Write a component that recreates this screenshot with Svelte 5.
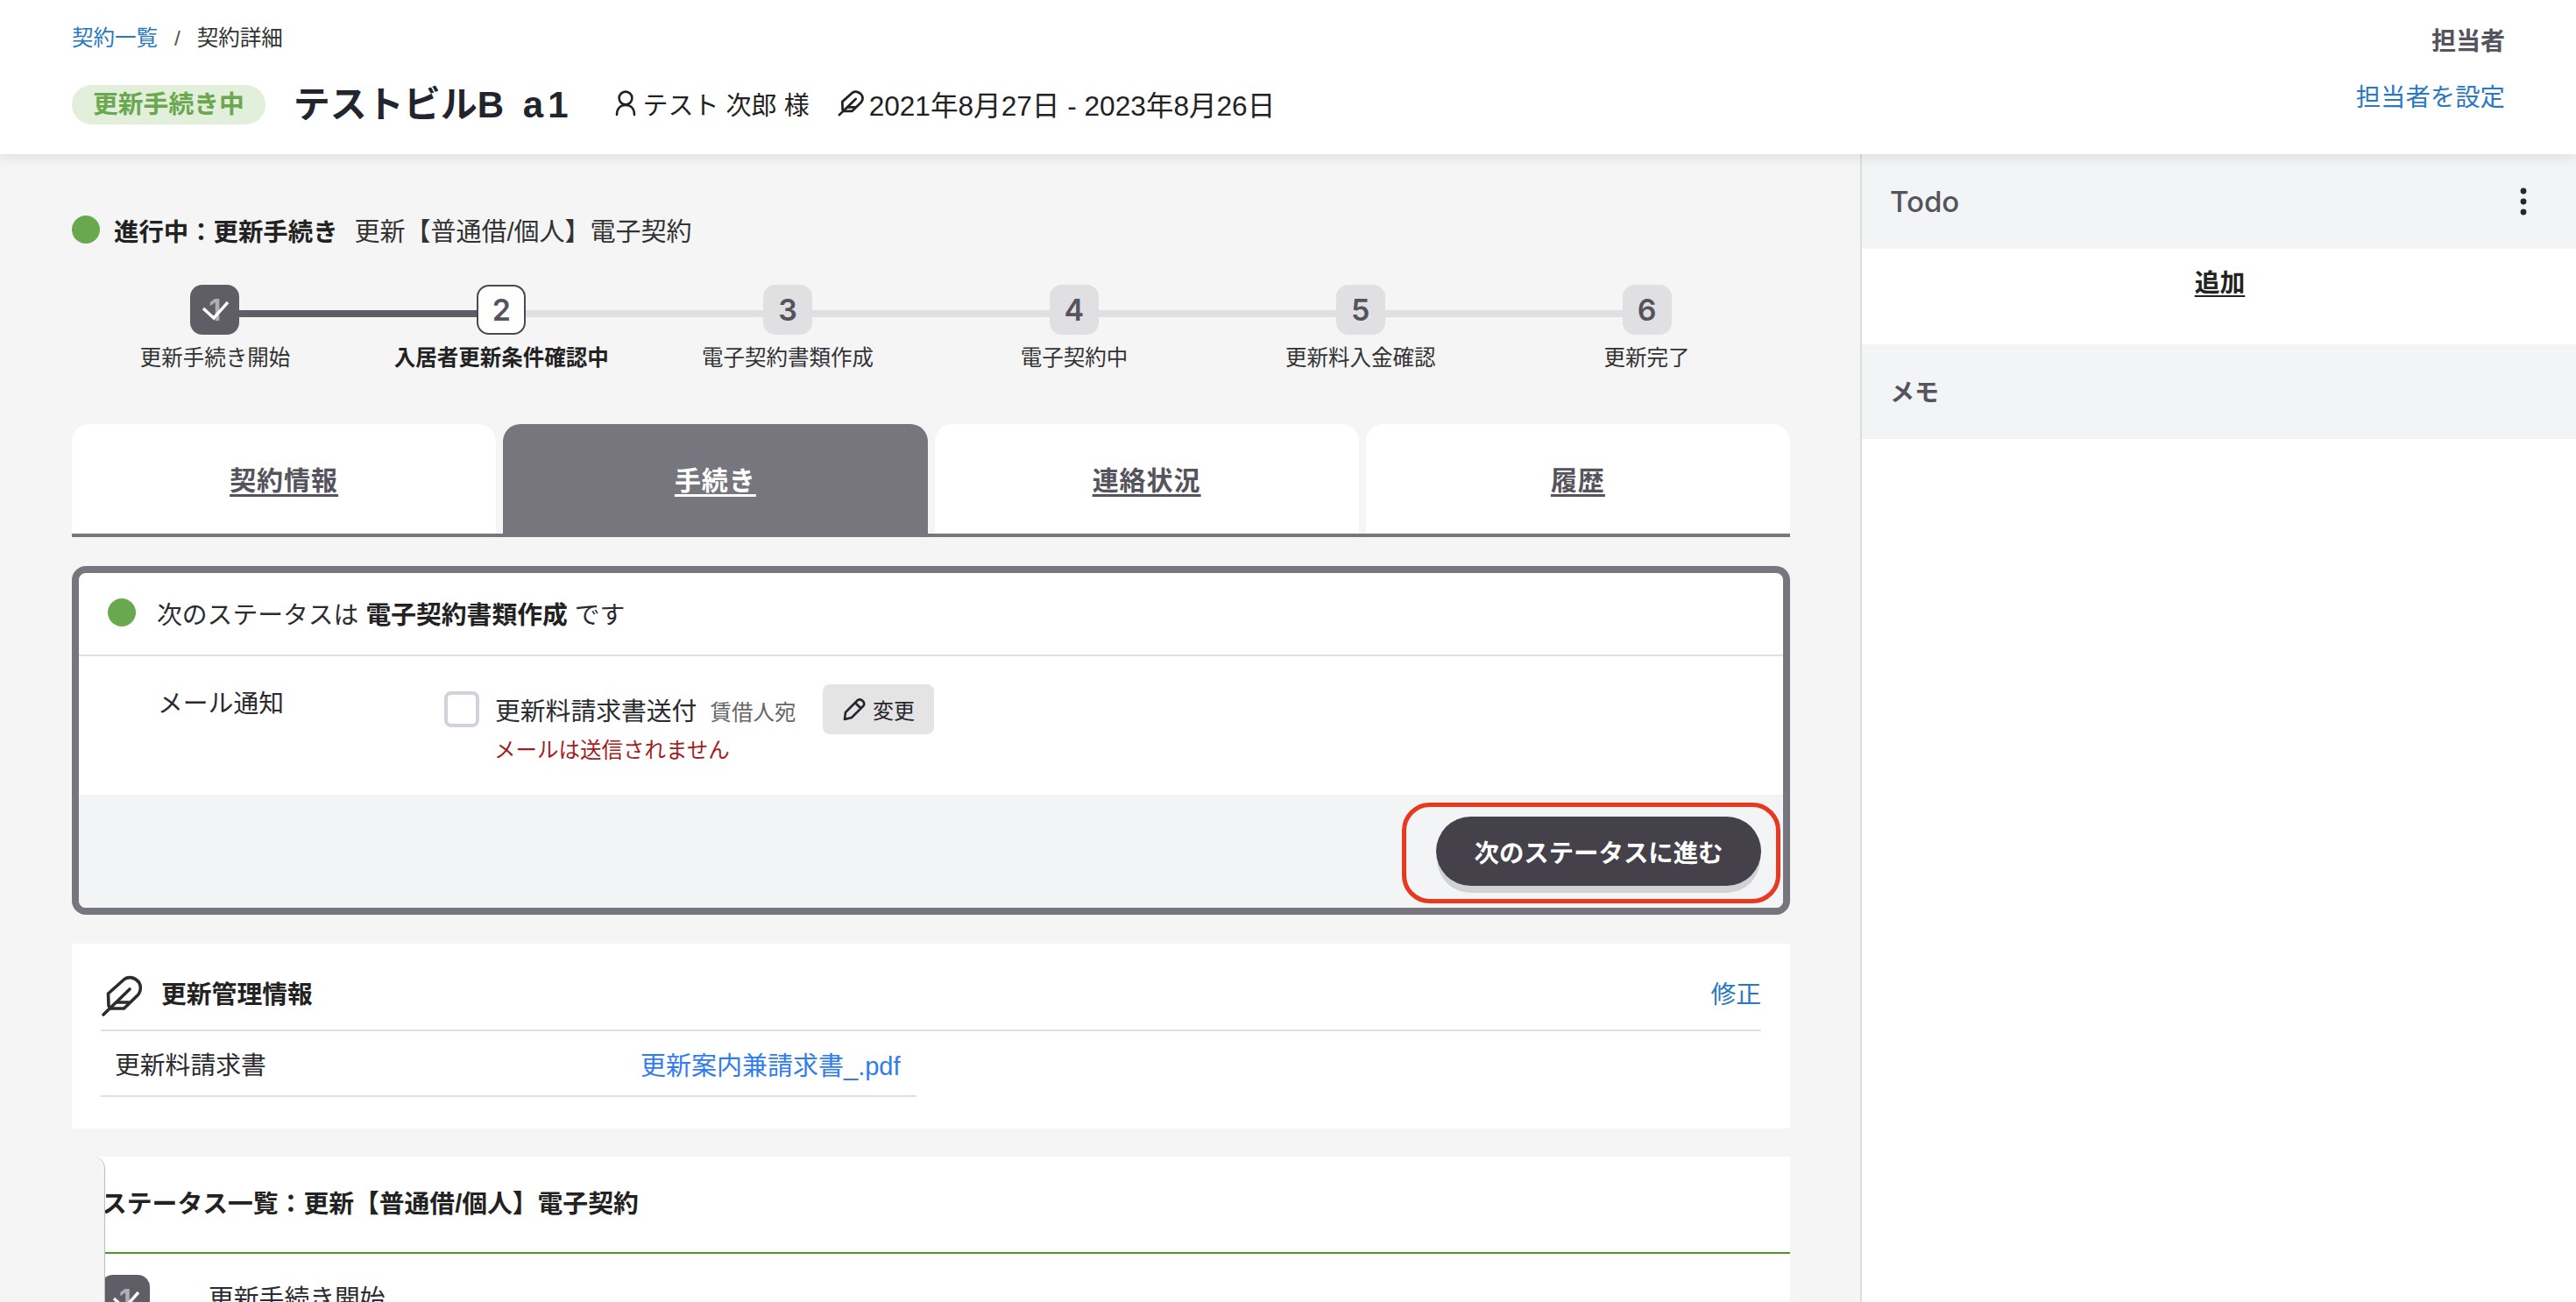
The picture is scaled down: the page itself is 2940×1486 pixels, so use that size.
<script>
	const steps = [
		{ no: 1, label: '更新手続き開始', state: 'done' },
		{ no: 2, label: '入居者更新条件確認中', state: 'current' },
		{ no: 3, label: '電子契約書類作成', state: '' },
		{ no: 4, label: '電子契約中', state: '' },
		{ no: 5, label: '更新料入金確認', state: '' },
		{ no: 6, label: '更新完了', state: '' },
	];
	const tabs = ['契約情報', '手続き', '連絡状況', '履歴'];
	let activeTab = $state(1);
</script>

{#snippet feather(size, weight)}
	<svg class="feather" width={size} height={size} viewBox="15 12 48 48" fill="none" stroke="currentColor" stroke-width={weight} stroke-linecap="round" stroke-linejoin="round">
		<path d="M26 50 L24 47 L23.5 33 L42 16.5 C47 13 54 14.5 58.5 20 C61 24 61 30 58 34 L41.5 50 Z" />
		<path d="M34 43 H47" />
		<path d="M18 57 L48 28" />
	</svg>
{/snippet}

{#snippet doneBox(no)}
	<span class="num">{no}</span>
	<svg class="check" viewBox="0 0 56 57" fill="none" stroke="#fff" stroke-width="3.4">
		<path d="M15 27 L27 38 L43 20" />
	</svg>
{/snippet}

<div class="page">
	<header class="top">
		<div class="top-left">
			<nav class="crumbs">
				<a href="#list">契約一覧</a>
				<span class="sep">/</span>
				<span>契約詳細</span>
			</nav>
			<div class="title-row">
				<span class="badge">更新手続き中</span>
				<h1>テストビル<span class="latin">B a1</span></h1>
				<span class="meta person">
					<svg width="24" height="30" viewBox="0 0 24 30" fill="none" stroke="currentColor" stroke-width="2.6" stroke-linecap="round">
						<circle cx="12" cy="9" r="7.4" />
						<path d="M2 28 C2 21 6 17 12 17 S22 21 22 28" />
					</svg>
					<span>テスト 次郎 様</span>
				</span>
				<span class="meta dates">
					{@render feather(30, 4.4)}
					<span>2021年8月27日 - 2023年8月26日</span>
				</span>
			</div>
		</div>
		<div class="top-right">
			<div class="owner-label">担当者</div>
			<a class="link" href="#owner">担当者を設定</a>
		</div>
	</header>

	<div class="body">
		<main>
			<div class="status-line">
				<span class="dot"></span>
				<strong>進行中：更新手続き</strong>
				<span>更新【普通借/個人】電子契約</span>
			</div>

			<ol class="stepper">
				{#each steps as s, i}
					<li class="step {s.state}" class:first={i === 0}>
						<div class="box">
							{#if s.state === 'done'}
								{@render doneBox(s.no)}
							{:else}
								<span class="num">{s.no}</span>
							{/if}
						</div>
						<div class="step-label">{s.label}</div>
					</li>
				{/each}
			</ol>

			<div class="tabs">
				{#each tabs as t, i}
					<button class:active={i === activeTab} onclick={() => (activeTab = i)}>{t}</button>
				{/each}
			</div>

			<section class="next-card">
				<div class="next-head">
					<span class="dot"></span>
					<span>次のステータスは <strong>電子契約書類作成</strong> です</span>
				</div>
				<div class="next-body">
					<div class="mail-label">メール通知</div>
					<div class="mail-main">
						<div class="mail-row">
							<input type="checkbox" class="cb" />
							<span class="mail-name">更新料請求書送付</span>
							<span class="mail-to">賃借人宛</span>
							<button class="change">
								<svg width="26" height="26" viewBox="30 22 26 26" fill="none" stroke="currentColor" stroke-width="2.6" stroke-linejoin="round">
									<path d="M32 46 L33 38 L47 24 Q49.5 22.5 52 24.5 L53.5 26 Q55 28.5 53.5 30.5 L40 44 Z M44 27 L51 34" />
								</svg>
								変更
							</button>
						</div>
						<div class="mail-warn">メールは送信されません</div>
					</div>
				</div>
				<div class="next-foot">
					<div class="mark">
						<button class="advance">次のステータスに進む</button>
					</div>
				</div>
			</section>

			<section class="info-card">
				<div class="info-head">
					{@render feather(48, 3.6)}
					<h2>更新管理情報</h2>
					<a class="link edit" href="#edit">修正</a>
				</div>
				<div class="info-row">
					<span>更新料請求書</span>
					<a href="#pdf">更新案内兼請求書_.pdf</a>
				</div>
			</section>

			<section class="list-card">
				<div class="gutter"></div>
				<div class="list-main">
					<h2>ステータス一覧：更新【普通借/個人】電子契約</h2>
					<div class="list-row">
						<div class="box done">
							{@render doneBox(1)}
						</div>
						<span>更新手続き開始</span>
					</div>
				</div>
			</section>
		</main>

		<aside>
			<div class="side-head todo">
				<span>Todo</span>
				<svg width="8" height="32" viewBox="0 0 8 32" fill="#26262c">
					<circle cx="4" cy="4" r="3.4" />
					<circle cx="4" cy="16" r="3.4" />
					<circle cx="4" cy="28" r="3.4" />
				</svg>
			</div>
			<div class="todo-body"><a href="#add">追加</a></div>
			<div class="side-head memo">メモ</div>
		</aside>
	</div>
</div>

<style>
	:global(body) { margin: 0; background: #f5f5f5; }
	.page {
		width: 2940px; height: 1486px; overflow: hidden; display: flex; flex-direction: column;
		font-family: "Liberation Sans", "Noto Sans CJK JP", sans-serif; font-size: 28.8px; color: #2b2b30; background: #f5f5f5;
	}
	a { text-decoration: none; }
	.link { color: #2a78c4; }

	.top { height: 176px; flex: none; box-sizing: border-box; display: flex; justify-content: space-between; background: #fff; box-shadow: 0 3px 14px rgba(0, 0, 0, 0.1); position: relative; z-index: 2; padding: 26px 81px 0 82px; }
	.crumbs { display: flex; font-size: 24.5px; line-height: 36px; color: #333; }
	.crumbs a { color: #2a78c4; }
	.sep { margin: 0 19px; color: #555; }
	.title-row { display: flex; align-items: center; margin-top: 35px; height: 45px; }
	.badge { background: #e2efda; color: #6aa84f; font-weight: 700; border-radius: 23px; height: 45px; line-height: 45px; padding: 0 24px; margin-right: 32px; white-space: nowrap; }
	h1 { margin: 0; font-size: 42px; font-weight: 700; color: #22252b; line-height: 45px; white-space: nowrap; }
	.latin { letter-spacing: 5px; }
	.meta { display: flex; align-items: center; white-space: nowrap; color: #222; padding-bottom: 3px; }
	.person { margin-left: 48px; gap: 8px; font-size: 29px; }
	.dates { margin-left: 32px; gap: 6px; font-size: 31.6px; }
	.top-right { text-align: right; margin-top: -1px; }
	.owner-label { font-weight: 700; color: #55545c; line-height: 42px; font-size: 28px; margin-top: 2px; }
	.top-right .link { display: block; margin-top: 21px; line-height: 42px; font-size: 28.4px; }

	.body { flex: 1; display: flex; min-height: 0; }
	main { width: 2123px; flex: none; box-sizing: border-box; padding: 70px 80px 0 82px; }
	aside { flex: 1; border-left: 2px solid #ddd; background: #fff; }

	.dot { width: 32px; height: 32px; border-radius: 50%; background: #6aa84f; flex: none; }
	.status-line { display: flex; align-items: center; height: 32px; white-space: nowrap; font-size: 29px; }
	.status-line strong { margin-left: 16px; margin-right: 19px; color: #222; font-size: 28.4px; }
	.status-line span:last-child { color: #333; }

	.stepper { list-style: none; margin: 47px 0 0; padding: 0; display: grid; grid-template-columns: repeat(6, 1fr); }
	.step { position: relative; display: flex; flex-direction: column; align-items: center; }
	.step::before { content: ""; position: absolute; left: -50%; right: 50%; top: 29px; height: 8px; background: #e0e0e2; }
	.step.first::before { display: none; }
	.step.current::before { background: #5f5e66; }
	.box { width: 56px; height: 57px; box-sizing: border-box; border-radius: 14px; background: #e0e0e2; color: #55545c; display: flex; align-items: center; justify-content: center; position: relative; z-index: 1; font-family: Inter, sans-serif; font-weight: 600; font-size: 34px; }
	.box.done, .done .box { background: #5f5e66; }
	.done .num, .box.done .num { color: rgba(255, 255, 255, 0.5); }
	.current .box { background: #fff; border: 2px solid #4a4953; }
	.check { position: absolute; left: 0; top: 0; width: 56px; height: 57px; }
	.step-label { margin-top: 9px; font-size: 24.5px; line-height: 36px; color: #333; white-space: nowrap; }
	.current .step-label { font-weight: 700; color: #222; }

	.tabs { display: flex; gap: 8px; margin-top: 57px; border-bottom: 4px solid #77767e; }
	.tabs button { flex: 1; height: 125px; border: none; border-radius: 20px 20px 0 0; background: #fff; color: #55545c; font: inherit; font-size: 30px; letter-spacing: 1px; font-weight: 700; text-decoration: underline; text-underline-offset: 5px; padding: 0 0 2px; }
	.tabs button.active { background: #77767e; color: #fff; }

	.next-card { margin-top: 33px; border: 8px solid #77767e; border-radius: 16px; background: #fff; overflow: hidden; }
	.next-head { box-sizing: border-box; height: 95px; display: flex; align-items: center; gap: 24px; padding-left: 33px; padding-bottom: 3px; border-bottom: 2px solid #e0e0e0; white-space: pre; }
	.next-head strong { color: #222; }
	.next-body { height: 158px; display: flex; }
	.mail-label { width: 417px; padding: 36px 0 0 90px; box-sizing: border-box; line-height: 36px; flex: none; }
	.mail-main { padding-top: 32px; }
	.mail-row { display: flex; align-items: center; height: 57px; }
	.cb { appearance: none; width: 40px; height: 41px; box-sizing: border-box; margin: 0 18px 0 0; border: 4px solid #ced4da; border-radius: 8px; background: #fff; }
	.mail-to { margin-left: 15px; font-size: 24.5px; color: #666; margin-top: 3px; }
	.change { display: flex; align-items: center; gap: 8px; width: 127px; height: 57px; margin-left: 31px; border: none; border-radius: 8px; background: #e4e4e4; color: #26262c; font: inherit; font-size: 24px; justify-content: center; padding: 0; }
	.mail-warn { margin: 1px 0 0 57px; font-size: 24.5px; line-height: 36px; color: #a11f1f; }
	.next-foot { height: 129px; box-sizing: border-box; background: #f3f4f6; display: flex; justify-content: flex-end; padding: 9px 3px 0 0; }
	.mark { height: 115px; box-sizing: border-box; border: 5px solid #e8391e; border-radius: 32px; padding: 11px 17px 0 34px; }
	.advance { display: block; width: 371px; height: 79px; border: none; border-radius: 40px; background: #44414b; color: #fff; font: inherit; font-size: 28.4px; font-weight: 700; box-shadow: 0 9px 0 -1px #d2d2d4; padding: 0; }

	.info-card { margin-top: 33px; height: 211px; box-sizing: border-box; background: #fff; padding: 0 33px; }
	.info-head { height: 100px; box-sizing: border-box; display: flex; align-items: center; border-bottom: 2px solid #e0e0e0; padding-top: 13px; }
	.info-head .feather { margin-top: 9px; }
	h2 { margin: 0; font-size: 28.8px; font-weight: 700; color: #222; white-space: nowrap; }
	.info-head h2 { margin-left: 21px; }
	.edit { margin-left: auto; }
	.info-row { width: 931px; height: 75px; box-sizing: border-box; display: grid; grid-template-columns: 600px 1fr; align-items: center; padding-left: 16px; border-bottom: 2px solid #e0e0e0; }
	.info-row a { color: #2f7bf0; white-space: nowrap; font-size: 29px; }

	.list-card { margin-top: 32px; height: 400px; background: #fff; display: flex; }
	.gutter { width: 38px; flex: none; background: #f5f5f5; border-right: 1px solid #bdbdbd; border-top-right-radius: 14px; box-sizing: border-box; }
	.list-main { flex: 1; overflow: hidden; min-width: 0; }
	.list-main h2 { height: 109px; line-height: 109px; margin-left: -4px; border-bottom: 2px solid #4c9a1f; }
	.list-row { display: flex; align-items: flex-start; margin: 24px 0 0 -5px; }
	.list-row span:last-child { margin-left: 67px; margin-top: 9px; line-height: 36px; }

	.side-head { background: #f3f4f6; color: #55545c; display: flex; align-items: center; justify-content: space-between; padding: 0 56px 0 32px; height: 108px; }
	.todo { font-family: Inter, sans-serif; font-size: 33px; font-weight: 500; }
	.memo { font-family: "Noto Sans CJK JP", sans-serif; font-size: 28px; font-weight: 700; box-sizing: border-box; padding-bottom: 2px; }
	.todo-body { height: 109px; text-align: center; padding-top: 21px; box-sizing: border-box; line-height: 36px; margin-right: -2px; }
	.todo-body a { color: #222; font-weight: 700; text-decoration: underline; text-underline-offset: 4px; }
</style>
